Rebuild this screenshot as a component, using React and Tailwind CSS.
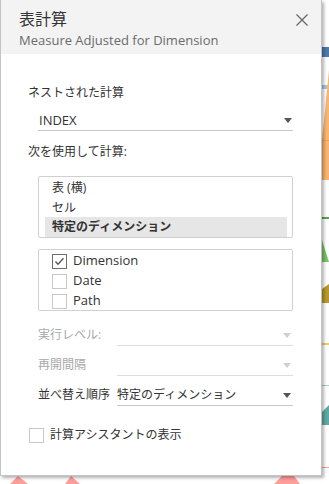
const jp = { fontFamily: '"Open Sans", "Noto Sans CJK JP", sans-serif' };

function Arrow({ disabled }) {
    return (
        <svg width="8" height="5" viewBox="0 0 8 5" className="shrink-0">
            <path d="M0 0H8L4 5Z" fill={disabled ? '#cfcfcf' : '#555555'} />
        </svg>
    );
}

function Close() {
    return (
        <svg width="12" height="12" viewBox="0 0 12 12" className="absolute right-[13px] top-[14px]">
            <path d="M0.5 0.5L11.5 11.5M11.5 0.5L0.5 11.5" stroke="#666" strokeWidth="1.2" />
        </svg>
    );
}

function Check({ checked }) {
    return (
        <span
            className={`flex h-[15px] w-[15px] shrink-0 items-center justify-center border bg-white ${
                checked ? 'border-[#6e6e6e]' : 'border-[#c8c8c8]'
            }`}
        >
            {checked && (
                <svg width="11" height="9" viewBox="0 0 11 9">
                    <path d="M1.5 4.5L4 7.2L9.5 1.2" fill="none" stroke="#555" strokeWidth="1.3" />
                </svg>
            )}
        </span>
    );
}

function Row({ label, value, disabled }) {
    return (
        <div className="flex h-[21px] items-start">
            <div className={`w-[79px] leading-[20px] ${disabled ? 'text-[#a8a8a8]' : 'text-[#333]'}`}>{label}</div>
            <div
                className={`flex h-[21px] flex-1 items-center justify-between border-b pr-[2px] ${
                    disabled ? 'border-[#dcdcdc]' : 'border-[#c8c8c8]'
                }`}
            >
                <span className="leading-[20px] text-[#333]">{value}</span>
                <Arrow disabled={disabled} />
            </div>
        </div>
    );
}

function Background() {
    return (
        <svg className="absolute inset-0" width="329" height="484" viewBox="0 0 329 484">
            <rect x="322" y="47" width="7" height="10" fill="#4e79a7" />
            <rect x="322" y="85" width="7" height="4" fill="#a0cbe8" />
            <path d="M329 70L322 140V180H329Z" fill="#f9b46f" />
            <rect x="322" y="140" width="7" height="1" fill="#e9a260" />
            <rect x="322" y="217" width="7" height="2" fill="#59a14f" />
            <path d="M322 240L329 262H322Z" fill="#7cc26a" />
            <path d="M322 289L329 284V303H322Z" fill="#b6992d" />
            <rect x="322" y="343" width="7" height="2" fill="#f1ce63" />
            <rect x="322" y="385" width="7" height="1" fill="#a5cfcc" />
            <path d="M322 412L329 405V425H322Z" fill="#5fa9a3" />
            <rect x="322" y="467" width="7" height="1" fill="#ff9d9a" />
            <path d="M10 484L18 476L28 484Z" fill="#ff9d9a" />
            <path d="M65 484L71 476L80 484Z" fill="#ff9d9a" />
            <path d="M274 484L282 476H294L300 484Z" fill="#ff9d9a" />
        </svg>
    );
}

export default function App() {
    return (
        <main className="relative h-[484px] w-[329px] overflow-hidden bg-white text-[12px]" style={jp}>
            <Background />

            <div className="relative flex h-[476px] w-[322px] flex-col border border-t-0 border-[#c4c4c4] bg-white shadow-[2px_2px_3px_rgba(0,0,0,0.3)]">
                <div className="relative h-[54px] bg-[#f3f3f3] pl-[18px] pt-[7px]">
                    <div className="text-[16px] leading-[24px] text-[#333]">表計算</div>
                    <div className="mt-[1px] text-[13px] leading-[16px] text-[#6b6b6b]">Measure Adjusted for Dimension</div>
                    <Close />
                </div>

                <div className="pl-[27px] pr-[28px]">
                    <div className="mt-[29px] leading-[20px] text-[#333]">ネストされた計算</div>

                    <div className="ml-[10px] mt-[7px] flex h-[21px] items-center justify-between border-b border-[#c8c8c8] pl-[1px] pr-[1px]">
                        <span className="text-[13px] leading-[20px] text-[#333]">INDEX</span>
                        <Arrow />
                    </div>

                    <div className="mt-[11px] leading-[20px] text-[#333]">次を使用して計算:</div>

                    <div className="ml-[10px] mt-[14px] h-[62px] rounded-[2px] border border-[#d0d0d0] pt-[1px]">
                        <div className="h-[20px] pl-[13px] leading-[20px] text-[#333]">表 (横)</div>
                        <div className="h-[19px] pl-[13px] leading-[19px] text-[#333]">セル</div>
                        <div className="ml-[6px] mr-[5px] h-[20px] bg-[#e6e6e6] pl-[7px] font-bold leading-[20px] text-[#333]">
                            特定のディメンション
                        </div>
                    </div>

                    <div className="ml-[10px] mt-[11px] h-[62px] rounded-[2px] border border-[#d0d0d0] pl-[13px] pt-[1px]">
                        {[
                            ['Dimension', true],
                            ['Date', false],
                            ['Path', false],
                        ].map(([name, on]) => (
                            <div key={name} className="flex h-[20px] items-center gap-[6px]">
                                <Check checked={on} />
                                <span className="text-[13px] text-[#333]">{name}</span>
                            </div>
                        ))}
                    </div>

                    <div className="ml-[10px] mt-[14px] flex flex-col gap-[9px]">
                        <Row label="実行レベル:" disabled />
                        <Row label="再開間隔" disabled />
                        <Row label="並べ替え順序" value="特定のディメンション" />
                    </div>

                    <div className="ml-[1px] mt-[21px] flex h-[16px] items-center gap-[6px]">
                        <Check />
                        <span className="text-[#333]">計算アシスタントの表示</span>
                    </div>
                </div>
            </div>
        </main>
    );
}
